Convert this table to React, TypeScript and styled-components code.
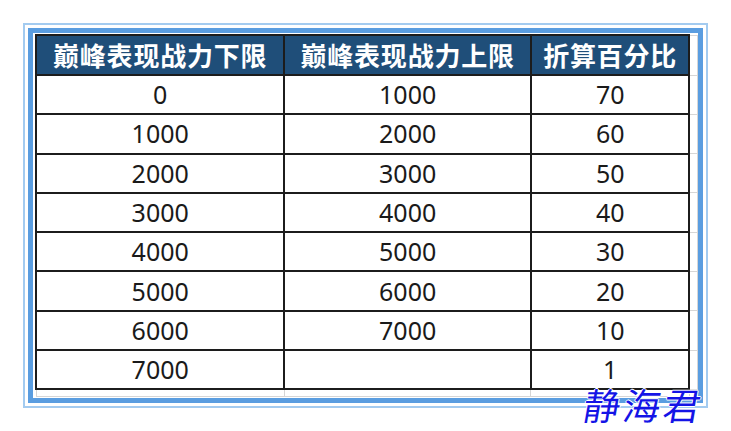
import React from 'react'
import styled, { createGlobalStyle } from 'styled-components'

const GlobalStyle = createGlobalStyle`
  html, body {
    margin: 0;
    padding: 0;
    background: #ffffff;
  }
  body {
    font-family: "Noto Sans", "Noto Sans CJK SC", sans-serif;
  }
`

const Page = styled.div`
  position: relative;
  width: 731px;
  height: 431px;
  padding: 23px 0 0 23px;
  box-sizing: border-box;
`

const OuterFrame = styled.div`
  width: 685px;
  height: 385px;
  box-sizing: border-box;
  border: 2px solid #a3cbf0;
  padding: 3px;
`

const SelectionFrame = styled.div`
  width: 100%;
  height: 100%;
  box-sizing: border-box;
  border: 5px solid #5a9de0;
  background: #ffffff;
  padding: 1px 0 0 2px;
  overflow: hidden;
`

const Sheet = styled.table`
  border-collapse: collapse;
  table-layout: fixed;
`

const HeadCell = styled.th`
  height: 38px;
  padding: 0;
  background: #1f4e79;
  color: #ffffff;
  font-family: "Noto Sans CJK SC", sans-serif;
  font-weight: 700;
  font-size: 26px;
  letter-spacing: 0.8px;
  line-height: 1;
  text-align: center;
  border: 2px solid #1c1c1c;
`

const Cell = styled.td`
  height: 37.3px;
  padding: 0;
  color: #1a1a1a;
  font-family: "Noto Sans", "Noto Sans CJK SC", sans-serif;
  font-size: 25px;
  line-height: 1;
  text-align: center;
  border: 2px solid #1c1c1c;
`

const GridCell = styled.td<{ $tall?: boolean }>`
  height: ${p => (p.$tall ? '37.3px' : '6px')};
  padding: 0;
  border: 1px solid #d6d6d6;
`

const Watermark = styled.div`
  position: absolute;
  left: 584px;
  top: 386px;
  color: #1414e6;
  font-family: "Noto Sans CJK SC", sans-serif;
  font-size: 37px;
  font-weight: 400;
  letter-spacing: 3px;
  line-height: 1;
  transform: skewX(-10deg);
  text-shadow: 1px 0 0 #fff, -1px 0 0 #fff, 0 1px 0 #fff, 0 -1px 0 #fff;
`

const rows: [string, string, string][] = [
  ['0', '1000', '70'],
  ['1000', '2000', '60'],
  ['2000', '3000', '50'],
  ['3000', '4000', '40'],
  ['4000', '5000', '30'],
  ['5000', '6000', '20'],
  ['6000', '7000', '10'],
  ['7000', '', '1'],
]

const App = () => {
  return (
    <>
      <GlobalStyle />
      <Page>
        <OuterFrame>
          <SelectionFrame>
            <Sheet>
              <colgroup>
                <col style={{ width: 249 }} />
                <col style={{ width: 247 }} />
                <col style={{ width: 159 }} />
                <col style={{ width: 8 }} />
              </colgroup>
              <thead>
                <tr>
                  <HeadCell>巅峰表现战力下限</HeadCell>
                  <HeadCell>巅峰表现战力上限</HeadCell>
                  <HeadCell>折算百分比</HeadCell>
                  <GridCell $tall />
                </tr>
              </thead>
              <tbody>
                {rows.map((r, i) => (
                  <tr key={i}>
                    <Cell>{r[0]}</Cell>
                    <Cell>{r[1]}</Cell>
                    <Cell>{r[2]}</Cell>
                    <GridCell $tall />
                  </tr>
                ))}
                <tr>
                  <GridCell />
                  <GridCell />
                  <GridCell />
                  <GridCell />
                </tr>
              </tbody>
            </Sheet>
          </SelectionFrame>
        </OuterFrame>
        <Watermark>静海君</Watermark>
      </Page>
    </>
  )
}

export default App
